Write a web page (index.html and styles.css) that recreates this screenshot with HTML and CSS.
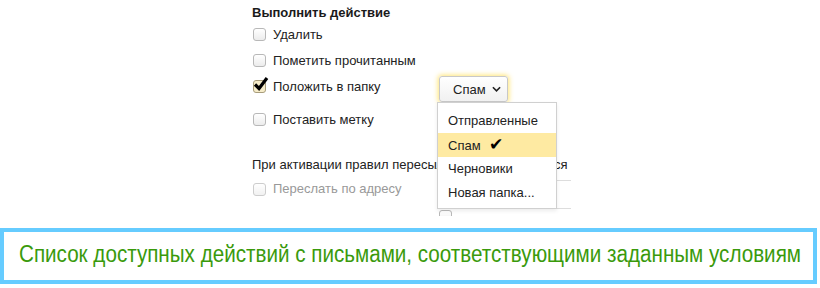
FILE: index.html
```html
<!DOCTYPE html>
<html lang="ru">

<head>
  <meta charset="utf-8">
  <link rel="stylesheet" href="styles.css">
</head>

<body>
  <div class="form">
    <h4 class="title">Выполнить действие</h4>

    <label class="option">
      <span class="check"></span>
      Удалить
    </label>

    <label class="option">
      <span class="check"></span>
      Пометить прочитанным
    </label>

    <div class="option option-folder">
      <span class="check checked">
        <svg class="tick" viewBox="0 0 16 16">
          <path d="M2 8.5 L6 12.5 L14 2" />
        </svg>
      </span>
      <span class="option-label">Положить в папку</span>
      <button class="select">
        Спам
        <svg class="chevron" viewBox="0 0 10 6">
          <path d="M1 1 L5 5 L9 1" />
        </svg>
      </button>
    </div>

    <label class="option option-label-row">
      <span class="check"></span>
      Поставить метку
    </label>

    <div class="note">При активации правил пересылки, письма остаются</div>

    <div class="option option-disabled">
      <span class="check"></span>
      <span class="option-label">Переслать по адресу</span>
      <span class="address"></span>
    </div>

    <div class="option option-next">
      <span class="check small"></span>
    </div>

    <ul class="menu">
      <li>Отправленные</li>
      <li class="active">Спам <span class="menu-tick">✔</span></li>
      <li>Черновики</li>
      <li>Новая папка...</li>
    </ul>
  </div>

  <div class="caption">
    <span class="caption-text">Список доступных действий с письмами, соответствующими заданным условиям</span>
  </div>
</body>

</html>
```

FILE: styles.css
```css
* {
  box-sizing: border-box;
  margin: 0;
  padding: 0;
}

body {
  width: 820px;
  height: 288px;
  overflow: hidden;
  background: #ffffff;
  font-family: 'Liberation Sans', Arial, sans-serif;
  font-size: 13px;
  color: #222222;
}

.form {
  position: relative;
  height: 216px;
  overflow: hidden;
  padding-left: 252px;
  padding-top: 5px;
}

.title {
  font-size: 13px;
  font-weight: bold;
  line-height: 16px;
  color: #1a1a1a;
}

.option {
  display: flex;
  align-items: center;
  gap: 7px;
  height: 26px;
  padding-left: 1px;
}

.check {
  position: relative;
  flex: none;
  width: 13px;
  height: 13px;
  border: 1px solid #b8b8b8;
  border-radius: 3px;
  background: linear-gradient(#ffffff, #ececec);
}

.check.checked {
  background: #f6ecc9;
  border-color: #a89d7c;
}

.tick {
  position: absolute;
  left: -1px;
  top: -5px;
  width: 16px;
  height: 16px;
  fill: none;
  stroke: #000000;
  stroke-width: 3.2;
}

.option-folder {
  margin-top: 1px;
  align-items: flex-start;
}

.option-folder .check {
  margin-top: 6px;
}

.option-folder .option-label {
  line-height: 26px;
  width: 159px;
}

.select {
  margin-top: 2px;
  height: 26px;
  width: 69px;
  padding-left: 13px;
  display: flex;
  align-items: center;
  gap: 6px;
  font-family: inherit;
  font-size: 13px;
  color: #222222;
  border: 1px solid #c8c8c8;
  border-radius: 3px;
  background: linear-gradient(#ffffff, #f1f1f1);
  box-shadow: 0 0 5px 1px rgba(255, 214, 40, 0.65);
}

.chevron {
  width: 9px;
  height: 6px;
  fill: none;
  stroke: #222222;
  stroke-width: 1.8;
}

.option-label-row {
  margin-top: 6px;
}

.note {
  margin-top: 23px;
  line-height: 20px;
  white-space: nowrap;
}

.option-disabled {
  width: 319px;
  color: #999999;
  margin-top: 1px;
  align-items: flex-start;
}

.option-disabled .check {
  margin-top: 7px;
  opacity: 0.7;
}

.option-disabled .option-label {
  line-height: 26px;
}

.address {
  height: 29px;
  width: 130px;
  margin-left: auto;
  margin-top: 4px;
  border-top: 1px solid #dddddd;
  border-bottom: 1px solid #dddddd;
}

.option-next {
  padding-left: 187px;
  align-items: flex-start;
  height: 20px;
  margin-top: 8px;
}

.menu {
  position: absolute;
  left: 437px;
  top: 102px;
  width: 120px;
  height: 107px;
  padding-top: 6px;
  list-style: none;
  background: #ffffff;
  border: 1px solid #d0d0d0;
  box-shadow: 0 2px 4px rgba(0, 0, 0, 0.08);
}

.menu li {
  height: 24px;
  line-height: 24px;
  padding-left: 10px;
  white-space: nowrap;
}

.menu li.active {
  background: #feeaa2;
}

.menu-tick {
  margin-left: 5px;
  font-size: 17px;
  color: #000000;
}

.caption {
  margin-top: 12px;
  width: 817px;
  height: 56px;
  border: 4px solid #66ccff;
  padding: 0 0 3px 15px;
  display: flex;
  align-items: center;
  overflow: hidden;
  color: #3a9a0c;
  white-space: nowrap;
}

.caption-text {
  display: inline-block;
  font-family: 'Liberation Sans', Arial, sans-serif;
  font-size: 23px;
  transform: scaleX(0.897);
  transform-origin: left center;
}
```
